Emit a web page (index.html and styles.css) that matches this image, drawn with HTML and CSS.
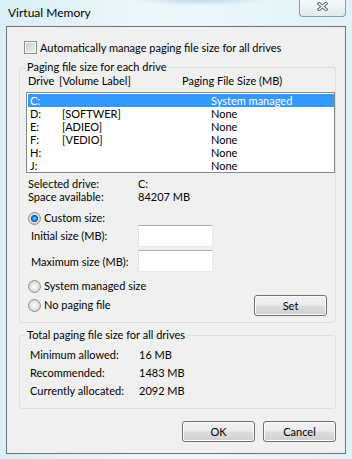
FILE: index.html
```html
<!DOCTYPE html>
<html lang="en">

<head>
    <meta charset="UTF-8">
    <title>Virtual Memory</title>
    <link rel="stylesheet" href="styles.css">
</head>

<body>

    <div class="window">
        <div class="titlebar">
            <span class="title">Virtual Memory</span>
            <div class="close-btn">
                <svg width="11" height="9" viewBox="0 0 11 9">
                    <path d="M2 1.5 L9 7.5 M9 1.5 L2 7.5" stroke="#5d6670" stroke-width="3.4" stroke-linecap="square" fill="none"/>
                    <path d="M2 1.5 L9 7.5 M9 1.5 L2 7.5" stroke="#ffffff" stroke-width="1.4" stroke-linecap="square" fill="none"/>
                </svg>
            </div>
        </div>

        <div class="client">
            <div class="check-row">
                <span class="checkbox"></span>
                <span>Automatically manage paging file size for all drives</span>
            </div>

            <fieldset class="group group-drives">
                <legend>Paging file size for each drive</legend>

                <div class="drive-head">
                    <span>Drive</span>
                    <span>[Volume Label]</span>
                    <span>Paging File Size (MB)</span>
                </div>

                <div class="drive-list">
                    <div class="drive-row selected"><span>C:</span><span></span><span>System managed</span></div>
                    <div class="drive-row"><span>D:</span><span>[SOFTWER]</span><span>None</span></div>
                    <div class="drive-row"><span>E:</span><span>[ADIEO]</span><span>None</span></div>
                    <div class="drive-row"><span>F:</span><span>[VEDIO]</span><span>None</span></div>
                    <div class="drive-row"><span>H:</span><span></span><span>None</span></div>
                    <div class="drive-row"><span>J:</span><span></span><span>None</span></div>
                </div>

                <div class="info-grid">
                    <span>Selected drive:</span><span>C:</span>
                    <span>Space available:</span><span>84207 MB</span>
                </div>

                <div class="radio-row custom">
                    <span class="radio checked"></span>
                    <span>Custom size:</span>
                </div>

                <div class="size-row">
                    <span class="size-label">Initial size (MB):</span>
                    <span class="textbox"></span>
                </div>
                <div class="size-row second">
                    <span class="size-label">Maximum size (MB):</span>
                    <span class="textbox"></span>
                </div>

                <div class="radio-row system">
                    <span class="radio"></span>
                    <span>System managed size</span>
                </div>

                <div class="radio-row no-file">
                    <span class="radio"></span>
                    <span class="radio-text">No paging file</span>
                    <button class="btn set-btn">Set</button>
                </div>
            </fieldset>

            <fieldset class="group group-total">
                <legend>Total paging file size for all drives</legend>
                <div class="total-grid">
                    <span>Minimum allowed:</span><span>16 MB</span>
                    <span>Recommended:</span><span>1483 MB</span>
                    <span>Currently allocated:</span><span>2092 MB</span>
                </div>
            </fieldset>

            <div class="dialog-buttons">
                <button class="btn">OK</button>
                <button class="btn">Cancel</button>
            </div>
        </div>
    </div>

</body>

</html>
```

FILE: styles.css
```css
* {
    box-sizing: border-box;
}

body {
    margin: 0;
    width: 352px;
    height: 459px;
    overflow: hidden;
    font-family: Lato, 'Liberation Sans', sans-serif;
    font-size: 11px;
    color: #000;
    background:
        radial-gradient(ellipse 70px 6px at 200px 0, rgba(120, 160, 200, 0.35), transparent),
        linear-gradient(to right, #d9eef6, #eef8fb 45%, #e0f3f8);
}

/* Title bar */
.titlebar {
    display: flex;
    justify-content: space-between;
    align-items: flex-start;
    height: 26px;
    padding: 0 6px 0 8px;
}

.title {
    margin-top: 6px;
    font-size: 12px;
    line-height: 13px;
}

.close-btn {
    width: 47px;
    height: 17px;
    display: flex;
    justify-content: center;
    align-items: flex-start;
    padding-top: 2px;
    border: 1px solid #8e9aa6;
    border-top: none;
    border-radius: 0 0 4px 4px;
    background: linear-gradient(#f6f9fb, #e3ebf0);
}

/* Dialog body */
.client {
    height: 428px;
    margin: 0 6px;
    padding: 14px 9px 0 12px;
    border: 1px solid #707478;
    background-color: #f0f0f0;
}

.check-row {
    display: flex;
    align-items: flex-start;
    gap: 3px;
    height: 13px;
    margin-left: 5px;
    line-height: 13px;
}

.checkbox {
    width: 13px;
    height: 13px;
    border: 1px solid #8e8f8f;
    background: linear-gradient(135deg, #c6cad0, #f4f4f5);
    box-shadow: inset 0 0 0 1px #fafafa;
}

.group {
    margin: 6px 0 0 0;
    padding: 0;
    min-width: 0;
    border: 1px solid #d5dfe5;
    border-radius: 3px;
}

.group legend {
    margin-left: 5px;
    padding: 0 2px;
    line-height: 14px;
}

.group-drives {
    padding-bottom: 6px;
}

.drive-head {
    display: grid;
    grid-template-columns: 31px 123px auto;
    padding-left: 8px;
    line-height: 13px;
}

.drive-list {
    height: 81px;
    margin: 5px 0 0 6px;
    padding: 1px 0 0 1px;
    border: 1px solid #828790;
    background-color: #fff;
}

.drive-row {
    display: grid;
    grid-template-columns: 32px 149px auto;
    height: 13px;
    padding-left: 2px;
    line-height: 13px;
}

.drive-row.selected {
    background-color: #3399ff;
    color: #fff;
}

.info-grid {
    display: grid;
    grid-template-columns: 110px auto;
    margin: 4px 0 0 8px;
    line-height: 13px;
}

.radio-row {
    display: flex;
    align-items: flex-start;
    gap: 3px;
    margin-left: 8px;
    line-height: 13px;
}

.radio {
    width: 13px;
    height: 13px;
    margin-top: 1px;
    border: 1px solid #929292;
    border-radius: 50%;
    background: radial-gradient(circle closest-side, #fbfbfb 0, #ececec 55%, #d2d2d2 100%);
}

.radio.checked {
    background: radial-gradient(circle closest-side, #8fd8ff 0, #2f8fd8 30%, #0c4c96 62%, #e9e9e9 68%, #cbcbcb 100%);
}

.radio-row.custom {
    margin-top: 8px;
}

.size-row {
    display: flex;
    align-items: flex-start;
    margin-left: 11px;
}

.size-row.second {
    margin-top: 3px;
}

.size-label {
    width: 107px;
    margin-top: 4px;
    line-height: 13px;
}

.size-row.second .size-label {
    margin-top: 5px;
}

.textbox {
    width: 75px;
    height: 22px;
    background-color: #fff;
    border: 1px solid;
    border-color: #abadb3 #e3e9ef #e3e9ef #e2e3ea;
}

.radio-row.system {
    margin-top: 7px;
}

.radio-row.no-file {
    margin-top: 2px;
}

.radio-row.no-file .radio {
    margin-top: 4px;
}

.radio-text {
    margin-top: 3px;
}

/* Buttons */
.btn {
    width: 73px;
    height: 21px;
    padding: 0;
    font: inherit;
    line-height: 19px;
    color: #000;
    border: 1px solid #707070;
    border-radius: 3px;
    background: linear-gradient(#f2f2f2 0%, #ebebeb 48%, #dddddd 52%, #cfcfcf 100%);
    box-shadow: inset 0 0 0 1px #fcfcfc;
}

.set-btn {
    margin-left: auto;
    margin-right: 8px;
}

.group-total {
    margin-top: 5px;
    padding-bottom: 11px;
}

.total-grid {
    display: grid;
    grid-template-columns: 109px auto;
    row-gap: 5px;
    margin: 6px 0 0 10px;
    line-height: 13px;
}

.dialog-buttons {
    display: flex;
    justify-content: flex-end;
    gap: 8px;
    margin-top: 12px;
}
```
